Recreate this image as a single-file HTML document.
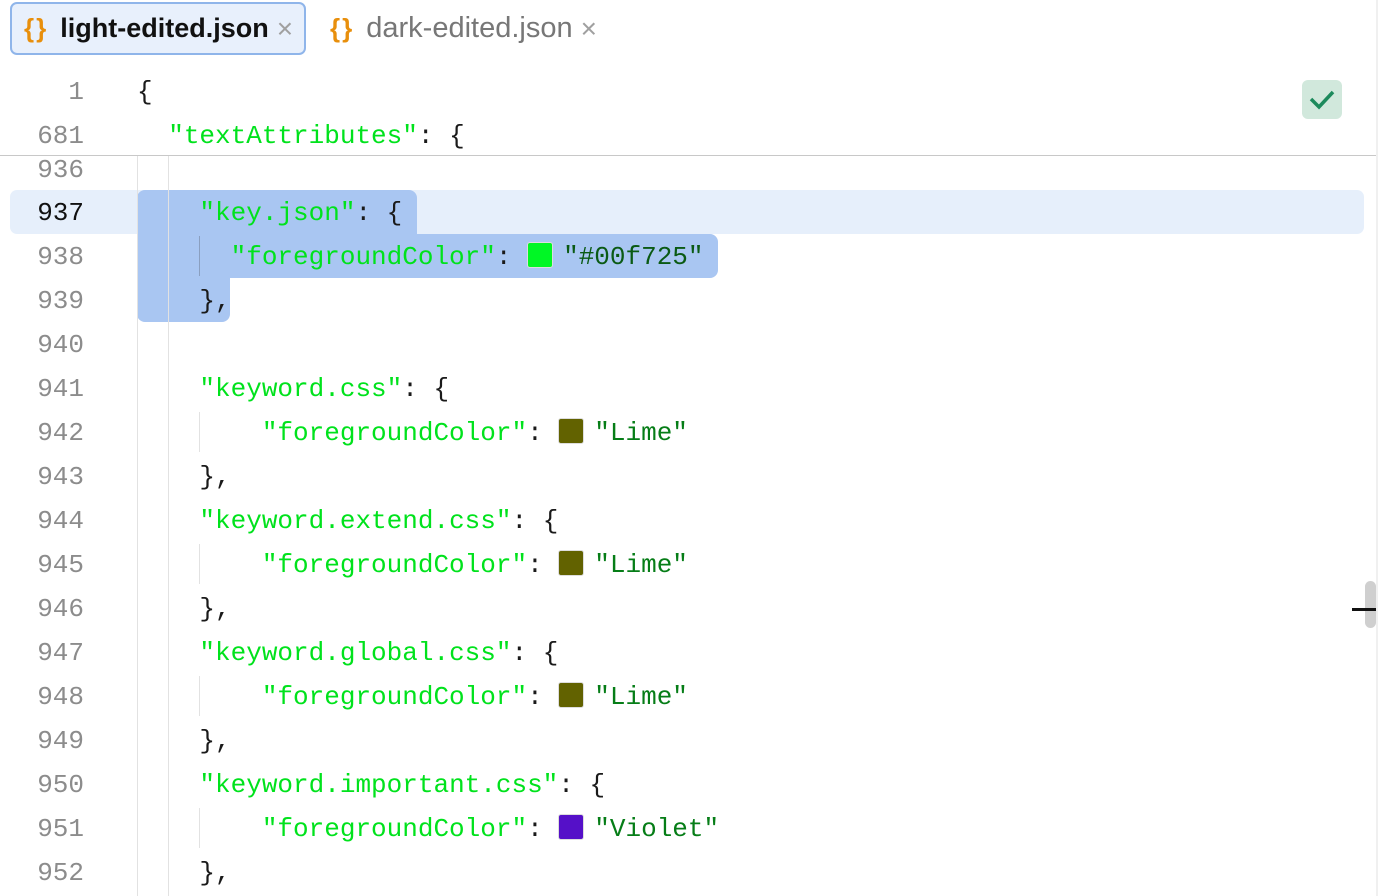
<!DOCTYPE html>
<html><head><meta charset="utf-8"><style>
body{margin:0;width:1378px;height:896px;background:#fff;overflow:hidden;position:relative;font-family:"Liberation Mono",monospace}
.tab{position:absolute;top:2px;height:53px;display:flex;align-items:center;font-family:"Liberation Sans",sans-serif}
.br{color:#e88f0c;font-weight:bold;font-family:"Liberation Sans",sans-serif;margin-right:12px;font-size:26px;letter-spacing:2px}
.x{color:#a0a0a0;font-size:28px;margin-left:8px;font-weight:normal}
.ln{position:absolute;left:0;width:84px;text-align:right;font-size:26px;color:#8c8c8c;height:44px;line-height:46px}
.cd{position:absolute;left:137px;font-size:26px;height:44px;line-height:46px;white-space:pre;color:#1a1a1a}
.k{color:#00e21c}.v{color:#067d17}
.sw{display:inline-block;width:26px;height:26px;border-radius:3px;vertical-align:-4px;margin-right:10px;border:1px solid #ddd;box-sizing:border-box}
.g{position:absolute;width:1px;background:#e2e2e2}
.sel{position:absolute;background:#a9c6f2}
</style></head><body>
<div class="tab" style="left:10px;width:296px;background:#e8f0fc;border:2px solid #8fb5ea;border-radius:7px;box-sizing:border-box;padding-left:12px;color:#111;font-size:27px;font-weight:bold"><span class="br">{}</span>light-edited.json<span class="x">×</span></div>
<div class="tab" style="left:330px;color:#777;font-size:29px"><span class="br">{}</span>dark-edited.json<span class="x">×</span></div>

<div style="position:absolute;left:1302px;top:80px;width:40px;height:39px;background:#d1e8dc;border-radius:6px"><svg width="40" height="39" viewBox="0 0 40 39"><path d="M9 19 L17 27 L31 12" fill="none" stroke="#1c8a5c" stroke-width="3.5"/></svg></div>

<div style="position:absolute;left:0;top:155px;width:1376px;height:1px;background:#c8c8c8"></div>
<div style="position:absolute;left:1376px;top:0;width:2px;height:896px;background:#f0f0f0"></div>
<div style="position:absolute;left:1365px;top:581px;width:11px;height:47px;background:#cfcfcf;border-radius:6px"></div>
<div style="position:absolute;left:1352px;top:608px;width:24px;height:3px;background:#111"></div>

<div style="position:absolute;left:10px;top:190px;width:1354px;height:44px;background:#e6effb;border-radius:7px"></div>
<div class="sel" style="left:137px;top:190px;width:280px;height:44px;border-radius:8px 8px 0 0"></div>
<div class="sel" style="left:137px;top:234px;width:581px;height:44px;border-radius:0 8px 8px 0"></div>
<div class="sel" style="left:137px;top:278px;width:93px;height:44px;border-radius:0 0 8px 8px"></div>

<div class="g" style="left:137px;top:156px;height:740px"></div>
<div class="g" style="left:168px;top:156px;height:740px"></div>
<div class="g" style="left:199px;top:236px;height:40px;background:#8a9fc0"></div>
<div class="g" style="left:199px;top:412px;height:40px"></div>
<div class="g" style="left:199px;top:544px;height:40px"></div>
<div class="g" style="left:199px;top:676px;height:40px"></div>
<div class="g" style="left:199px;top:808px;height:40px"></div>

<div style="position:absolute;left:0;top:0;width:1376px;height:155px;overflow:hidden">
<div class="ln" style="top:69px">1</div><div class="cd" style="top:69px">{</div>
<div class="ln" style="top:113px">681</div><div class="cd" style="top:113px">  <span class="k">"textAttributes"</span>: {</div>
</div>
<div style="position:absolute;left:0;top:156px;width:1376px;height:740px;overflow:hidden">
<div class="ln" style="top:-9px">936</div>
</div>
<div class="ln" style="top:190px;color:#111">937</div><div class="cd" style="top:190px">    <span class="k">"key.json"</span>: {</div>
<div class="ln" style="top:234px">938</div><div class="cd" style="top:234px">      <span class="k">"foregroundColor"</span>: <span class="sw" style="background:#00f725"></span><span class="v" style="color:#0a5a14">"#00f725"</span></div>
<div class="ln" style="top:278px">939</div><div class="cd" style="top:278px">    },</div>
<div class="ln" style="top:322px">940</div>
<div class="ln" style="top:366px">941</div><div class="cd" style="top:366px">    <span class="k">"keyword.css"</span>: {</div>
<div class="ln" style="top:410px">942</div><div class="cd" style="top:410px">        <span class="k">"foregroundColor"</span>: <span class="sw" style="background:#626200"></span><span class="v">"Lime"</span></div>
<div class="ln" style="top:454px">943</div><div class="cd" style="top:454px">    },</div>
<div class="ln" style="top:498px">944</div><div class="cd" style="top:498px">    <span class="k">"keyword.extend.css"</span>: {</div>
<div class="ln" style="top:542px">945</div><div class="cd" style="top:542px">        <span class="k">"foregroundColor"</span>: <span class="sw" style="background:#626200"></span><span class="v">"Lime"</span></div>
<div class="ln" style="top:586px">946</div><div class="cd" style="top:586px">    },</div>
<div class="ln" style="top:630px">947</div><div class="cd" style="top:630px">    <span class="k">"keyword.global.css"</span>: {</div>
<div class="ln" style="top:674px">948</div><div class="cd" style="top:674px">        <span class="k">"foregroundColor"</span>: <span class="sw" style="background:#626200"></span><span class="v">"Lime"</span></div>
<div class="ln" style="top:718px">949</div><div class="cd" style="top:718px">    },</div>
<div class="ln" style="top:762px">950</div><div class="cd" style="top:762px">    <span class="k">"keyword.important.css"</span>: {</div>
<div class="ln" style="top:806px">951</div><div class="cd" style="top:806px">        <span class="k">"foregroundColor"</span>: <span class="sw" style="background:#5510c8"></span><span class="v">"Violet"</span></div>
<div class="ln" style="top:850px">952</div><div class="cd" style="top:850px">    },</div>
</body></html>
